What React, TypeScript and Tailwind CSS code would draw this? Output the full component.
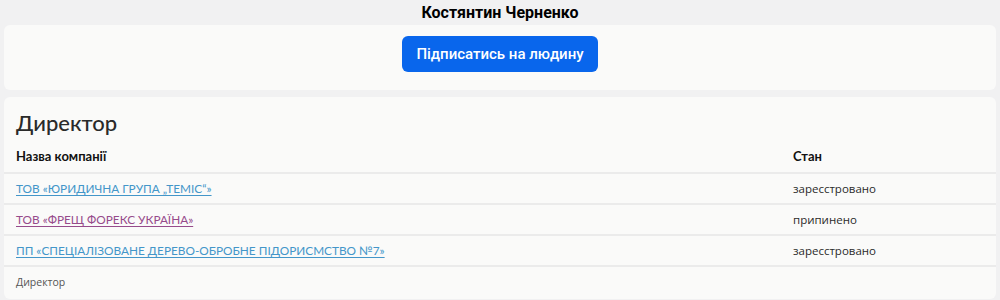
const companies = [
  { name: "ТОВ «ЮРИДИЧНА ГРУПА „ТЕМІС“»", status: "заресстровано", visited: false },
  { name: "ТОВ «ФРЕЩ ФОРЕКС УКРАЇНА»", status: "припинено", visited: true },
  { name: "ПП «СПЕЦІАЛІЗОВАНЕ ДЕРЕВО-ОБРОБНЕ ПІДОРИСМСТВО №7»", status: "заресстровано", visited: false },
];

export default function App() {
  return (
    <div className="min-h-[300px] bg-[#f1f1f2] px-1 pb-1 font-['Roboto',sans-serif] text-[#1a1a1a]">
      <h1 className="pt-[3px] text-center text-[16px] font-bold leading-[19px] text-black">
        Костянтин Черненко
      </h1>

      <div className="mt-[3px] flex h-[65px] items-start justify-center rounded-md bg-[#fafaf9] pt-[11px]">
        <button className="h-[36px] w-[196px] rounded-md bg-[#0966ec] text-[15px] font-medium text-white">
          Підписатись на людину
        </button>
      </div>

      <div className="mt-[7px] rounded-md bg-[#fafaf9] font-['Lato',sans-serif]">
        <h2 className="px-3 pt-[12px] text-[22px] leading-[28px] font-medium text-[#2a2a2a]">Директор</h2>
        <table className="mt-[5px] w-full border-collapse text-[13px]">
          <thead>
            <tr className="h-[31px] border-b-2 border-[#ebebeb]">
              <th className="px-3 text-left font-bold text-[#111]">Назва компанії</th>
              <th className="w-[203px] px-0 text-left font-bold text-[#111]">Стан</th>
            </tr>
          </thead>
          <tbody>
            {companies.map((c) => (
              <tr key={c.name} className="h-[31px] border-b-2 border-[#ebebeb]">
                <td className="px-3 text-[11.8px]">
                  <a
                    href="#"
                    className={
                      c.visited
                        ? "text-[#974b8b] underline underline-offset-2"
                        : "text-[#4396c9] underline underline-offset-2"
                    }
                  >
                    {c.name}
                  </a>
                </td>
                <td className="font-['Open_Sans',sans-serif] text-[11.5px] text-[#2a2a2a]">{c.status}</td>
              </tr>
            ))}
          </tbody>
        </table>
        <p className="px-3 py-[8px] font-['Open_Sans',sans-serif] text-[10.5px] text-[#555]">Директор</p>
      </div>
    </div>
  );
}
